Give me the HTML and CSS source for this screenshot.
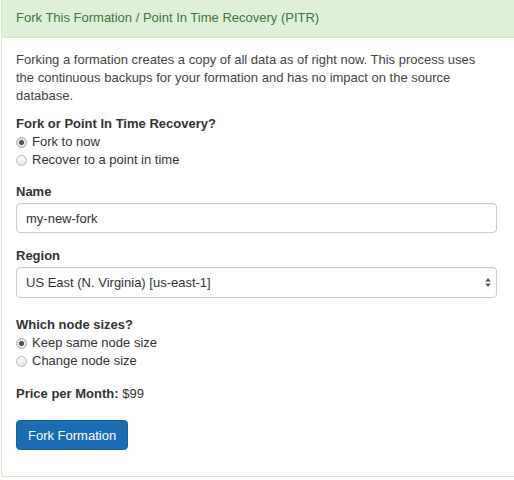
FILE: index.html
```html
<!DOCTYPE html>
<html>
<head>
<meta charset="utf-8">
<link rel="stylesheet" href="styles.css">
</head>
<body>
<div class="panel">
  <div class="panel-heading">Fork This Formation / Point In Time Recovery (PITR)</div>
  <div class="panel-body">
    <p class="intro">Forking a formation creates a copy of all data as of right now. This process uses the continuous backups for your formation and has no impact on the source database.</p>

    <div class="group">
      <div class="label">Fork or Point In Time Recovery?</div>
      <label class="radio"><input type="radio" name="mode" checked><span>Fork to now</span></label>
      <label class="radio"><input type="radio" name="mode"><span>Recover to a point in time</span></label>
    </div>

    <div class="group">
      <div class="label">Name</div>
      <input class="control" type="text" value="my-new-fork">
    </div>

    <div class="group group-select">
      <div class="label">Region</div>
      <div class="select-wrap">
        <select class="control select">
          <option>US East (N. Virginia) [us-east-1]</option>
        </select>
        <svg class="select-arrows" width="6" height="11" viewBox="0 0 6 11">
          <path d="M3 1 L5.8 4.6 L0.2 4.6 Z" fill="#555"/>
          <path d="M3 10 L5.8 6.4 L0.2 6.4 Z" fill="#555"/>
        </svg>
      </div>
    </div>

    <div class="group">
      <div class="label">Which node sizes?</div>
      <label class="radio"><input type="radio" name="size" checked><span>Keep same node size</span></label>
      <label class="radio"><input type="radio" name="size"><span>Change node size</span></label>
    </div>

    <div class="group price">
      <b>Price per Month:</b> $99
    </div>

    <button class="btn">Fork Formation</button>
  </div>
</div>
</body>
</html>
```

FILE: styles.css
```css
html, body {
  margin: 0;
  padding: 0;
  background: #fff;
}
body {
  font-family: "Liberation Sans", Arial, Helvetica, sans-serif;
  font-size: 13px;
  line-height: 18px;
  color: #333;
}
.panel {
  margin-left: 1px;
  width: 540px;
  border: 1px solid #d6e9c6;
  border-top: none;
  border-radius: 0 0 4px 4px;
  box-shadow: 0 1px 1px rgba(0,0,0,0.05);
}
.panel-heading {
  background: #dff0d8;
  color: #3c763d;
  border-bottom: 1px solid #d6e9c6;
  padding: 9px 14px 10px;
  font-size: 13px;
  line-height: 18px;
}
.panel-body {
  padding: 13px 14px 15px;
}
.intro {
  margin: 0 0 10px;
  width: 470px;
  color: #444;
}
.group {
  margin-bottom: 14px;
}
.group-select {
  margin-bottom: 18px;
}
.label {
  font-weight: bold;
  margin-bottom: 0;
}
.group .label + .control,
.group .label + .select-wrap {
  margin-top: 2px;
}
.radio {
  display: flex;
  align-items: center;
  height: 18px;
}
.radio input {
  appearance: none;
  -webkit-appearance: none;
  width: 11px;
  height: 11px;
  margin: 0 5px 0 0;
  border-radius: 50%;
  border: 1px solid #b8b8b8;
  background: linear-gradient(#fdfdfd, #e4e4e4);
  position: relative;
  flex: none;
}
.radio input:checked {
  background: radial-gradient(circle, #555 0, #555 2.2px, #e9e9e9 2.8px, #dcdcdc 100%);
  border-color: #a8a8a8;
}
.control {
  box-sizing: border-box;
  display: block;
  width: 481px;
  height: 30px;
  border: 1px solid #ccc;
  border-radius: 4px;
  padding: 0 9px;
  font-family: inherit;
  font-size: 13px;
  color: #333;
  background: #fff;
  box-shadow: inset 0 1px 1px rgba(0,0,0,0.06);
}
.select-wrap {
  position: relative;
  width: 481px;
}
.select {
  appearance: none;
  -webkit-appearance: none;
  outline: none;
  height: 31px;
}
.select-arrows {
  position: absolute;
  right: 6px;
  top: 10px;
  pointer-events: none;
}
.price {
  margin-top: 15px;
  margin-bottom: 17px;
}
.btn {
  display: block;
  background: #1a6db4;
  color: #fff;
  border: 1px solid #175f9e;
  border-radius: 4px;
  font-family: inherit;
  font-size: 13px;
  padding: 0 11px;
  height: 30px;
  margin-bottom: 11px;
}
```
